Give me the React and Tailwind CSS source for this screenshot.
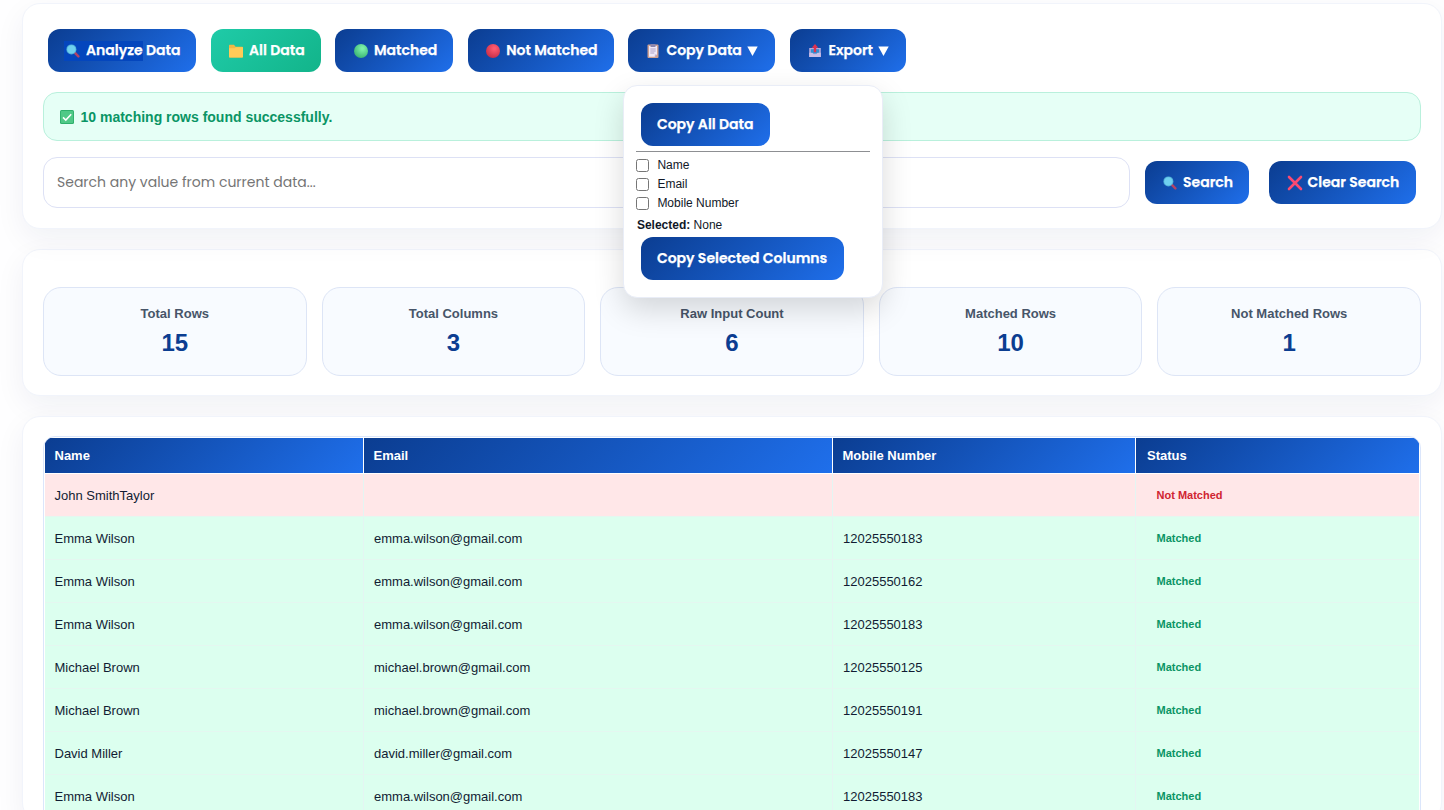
import { useState } from 'react';
import { clsx } from 'clsx';

const stats = [
  { label: 'Total Rows', value: 15 },
  { label: 'Total Columns', value: 3 },
  { label: 'Raw Input Count', value: 6 },
  { label: 'Matched Rows', value: 10 },
  { label: 'Not Matched Rows', value: 1 },
];

const rows = [
  { name: 'John SmithTaylor', email: '', mobile: '', matched: false },
  { name: 'Emma Wilson', email: 'emma.wilson@gmail.com', mobile: '12025550183', matched: true },
  { name: 'Emma Wilson', email: 'emma.wilson@gmail.com', mobile: '12025550162', matched: true },
  { name: 'Emma Wilson', email: 'emma.wilson@gmail.com', mobile: '12025550183', matched: true },
  { name: 'Michael Brown', email: 'michael.brown@gmail.com', mobile: '12025550125', matched: true },
  { name: 'Michael Brown', email: 'michael.brown@gmail.com', mobile: '12025550191', matched: true },
  { name: 'David Miller', email: 'david.miller@gmail.com', mobile: '12025550147', matched: true },
  { name: 'Emma Wilson', email: 'emma.wilson@gmail.com', mobile: '12025550183', matched: true },
];

const columns = ['Name', 'Email', 'Mobile Number'];

function Glyph({ children }) {
  return (
    <svg width="16" height="16" viewBox="0 0 16 16" fill="none" className="shrink-0">
      {children}
    </svg>
  );
}

function MagnifierIcon() {
  return (
    <Glyph>
      <path d="M10.2 10.2l3.2 3.2" stroke="#b04468" strokeWidth="2.5" strokeLinecap="round" />
      <circle cx="6.4" cy="6.4" r="5" fill="#4fb0d8" />
      <circle cx="6.4" cy="6.4" r="4.2" fill="#6fd0ef" />
    </Glyph>
  );
}

function FolderIcon() {
  return (
    <Glyph>
      <path d="M1 2.8c0-.6.4-1 1-1h4l1.6 2H14c.6 0 1 .4 1 1v8.7c0 .6-.4 1-1 1H2c-.6 0-1-.4-1-1z" fill="#f0b845" />
      <path d="M1 5.3h5.4l1.5-1.1H15v9.3c0 .6-.4 1-1 1H2c-.6 0-1-.4-1-1z" fill="#ffcb58" />
    </Glyph>
  );
}

function DotIcon({ id, light, dark }) {
  return (
    <Glyph>
      <defs>
        <radialGradient id={id} cx="0.6" cy="0.32" r="0.75">
          <stop offset="0.1" stopColor={light} />
          <stop offset="1" stopColor={dark} />
        </radialGradient>
      </defs>
      <circle cx="8" cy="8" r="7" fill={`url(#${id})`} />
    </Glyph>
  );
}

function ClipboardIcon() {
  return (
    <Glyph>
      <rect x="2.5" y="1.5" width="11" height="13.5" rx="1" fill="#cfa293" />
      <path d="M4 3h8v8.5L9.8 13.7H4z" fill="#f0e9f8" />
      <path d="M12 11.5H9.8v2.2z" fill="#b9a9cf" />
      <rect x="5.5" y="1" width="5" height="3" rx=".6" fill="#8c86ad" />
      <path d="M5.3 6h5.4M5.3 8h5.4M5.3 10h4" stroke="#a79bc2" strokeWidth=".9" />
    </Glyph>
  );
}

function OutboxIcon() {
  return (
    <Glyph>
      <path d="M2.2 5h11.6v9H2.2z" fill="#b5a9dc" />
      <path d="M3.8 6.2h8.4v4.3H3.8z" fill="#2f8fd3" />
      <path d="M2.2 9.8h3.3l1 1.5h3l1-1.5h3.3V14H2.2z" fill="#cabfe8" />
      <path d="M8 1l3.3 3.7H9.2v4.5H6.8V4.7H4.7z" fill="#e0314f" />
    </Glyph>
  );
}

function CrossIcon() {
  return (
    <Glyph>
      <path d="M2 2l12 12M14 2L2 14" stroke="#fa4a72" strokeWidth="2.6" strokeLinecap="round" />
    </Glyph>
  );
}

function CheckIcon() {
  return (
    <Glyph>
      <rect x="1" y="1" width="14" height="14" rx="1.5" fill="#2fb06c" />
      <rect x="1.9" y="1.9" width="12.2" height="12.2" rx="1" fill="#50c987" />
      <path d="M4 8.4l2.8 2.7L12.2 5.3" stroke="#fff" strokeWidth="1.5" />
    </Glyph>
  );
}

function Caret() {
  return (
    <svg width="11" height="10" viewBox="0 0 11 10" className="shrink-0">
      <path d="M.3.5h10.4L5.5 9.9z" fill="#fff" />
    </svg>
  );
}

const headingFont = "font-[Poppins,Inter,sans-serif] [font-feature-settings:'cv11']";

function Button({ className, green, children, ...props }) {
  return (
    <button
      className={clsx(
        headingFont,
        'flex h-[43px] shrink-0 items-center rounded-xl text-[14px] font-semibold whitespace-nowrap text-white [-webkit-text-stroke:0.25px_white]',
        green ? 'bg-linear-135 from-[#1fcba8] to-[#12b48a]' : 'bg-linear-135 from-[#0b3d91] to-[#1f6feb]',
        className
      )}
      {...props}
    >
      {children}
    </button>
  );
}

function Card({ className, children }) {
  return (
    <section
      className={clsx(
        'rounded-[18px] border border-[#f1f4fb] bg-white px-5 shadow-[0_10px_30px_rgba(15,35,80,0.06)]',
        className
      )}
    >
      {children}
    </section>
  );
}

function CopyMenu({ selected, onToggle }) {
  return (
    <div className="absolute top-[56px] -left-[5px] z-10 h-[213px] w-[260px] rounded-[14px] border border-[#e9edf7] bg-white p-3 pt-[17px] text-[12px] leading-[19px] text-[#111827] shadow-[0_12px_30px_rgba(0,0,0,0.15)]">
      <Button className="ml-[5px] w-[129px] pl-[15.5px]">Copy All Data</Button>
      <hr className="mt-[5px] mb-[4px] border-t-[1px] border-[#8d8f92]" />
      {columns.map((column) => (
        <label key={column} className="flex h-[19px] items-center">
          <input
            type="checkbox"
            checked={selected.includes(column)}
            onChange={() => onToggle(column)}
            className="mr-2 size-[13px] appearance-none rounded-[2.5px] border border-[#767676] bg-white checked:bg-[#1f6feb]"
          />
          {column}
        </label>
      ))}
      <p className="mt-[3px] pl-[0.5px]">
        <b>Selected:</b> {selected.length ? selected.join(', ') : 'None'}
      </p>
      <Button className="mt-[2px] ml-[5px] w-[203px] pl-[15.5px]">Copy Selected Columns</Button>
    </div>
  );
}

function Toolbar() {
  const [menuOpen, setMenuOpen] = useState(true);
  const [selected, setSelected] = useState([]);

  const toggle = (column) =>
    setSelected((prev) => (prev.includes(column) ? prev.filter((c) => c !== column) : [...prev, column]));

  return (
    <div className="flex gap-[14.6px] pl-[5px]">
      <Button className="w-[148px] pl-4">
        <span className="flex h-5 items-center gap-[5px] bg-[#0446bd] pl-px">
          <MagnifierIcon />
          Analyze
        </span>
        <span className="ml-[3.5px]">Data</span>
      </Button>
      <Button green className="w-[110px] gap-[5px] pl-[17.5px]">
        <FolderIcon />
        All Data
      </Button>
      <Button className="w-[118px] gap-[5px] pl-[17.8px]">
        <DotIcon id="dot-green" light="#7cf0a8" dark="#35b070" />
        Matched
      </Button>
      <Button className="w-[146px] gap-[5px] pl-[17.5px]">
        <DotIcon id="dot-red" light="#ff5a6e" dark="#c42b46" />
        Not Matched
      </Button>
      <div className="relative">
        <Button className="w-[147px] gap-[5px] pl-[17px]" onClick={() => setMenuOpen(!menuOpen)}>
          <ClipboardIcon />
          Copy Data
          <Caret />
        </Button>
        {menuOpen && <CopyMenu selected={selected} onToggle={toggle} />}
      </div>
      <Button className="w-[116px] gap-[5px] pl-[17.5px]">
        <OutboxIcon />
        Export
        <Caret />
      </Button>
    </div>
  );
}

const cell = 'flex items-center border-r border-[#e4f5f2] pt-px';

function ResultsTable() {
  return (
    <div className="overflow-hidden rounded-t-xl border border-[#dbe6fb] p-px">
      <div className="mb-px grid grid-cols-[318px_468px_302px_283px] gap-px text-[13px] font-bold text-white">
        {[...columns, 'Status'].map((title) => (
          <div
            key={title}
            className="flex h-[35px] items-center bg-linear-135 from-[#0b3d91] to-[#1f6feb] pl-[9.5px] last:pl-[11px]"
          >
            {title}
          </div>
        ))}
      </div>
      {rows.map((row, i) => (
        <div
          key={i}
          className={clsx(
            'grid h-[43px] grid-cols-[319px_469px_303px_283px] border-b border-[#e4f7f0] text-[13px] text-[#111c33]',
            row.matched ? 'bg-[#dcffef]' : 'bg-[#ffe7e8]'
          )}
        >
          <span className={clsx(cell, 'pl-[9.5px]')}>{row.name}</span>
          <span className={clsx(cell, 'pl-[10px]')}>{row.email}</span>
          <span className={clsx(cell, 'pl-[10px]')}>{row.mobile}</span>
          <span
            className={clsx(
              'flex items-center pt-px pl-[20.5px] text-[11px] font-bold',
              row.matched ? 'text-[#0a9565]' : 'text-[#d02431]'
            )}
          >
            {row.matched ? 'Matched' : 'Not Matched'}
          </span>
        </div>
      ))}
    </div>
  );
}

export default function App() {
  const [query, setQuery] = useState('');

  return (
    <div className="h-[810px] overflow-hidden bg-[#fefeff] font-['Liberation_Sans',Arial,sans-serif]">
      <main className="ml-[22px] flex w-[1420px] flex-col gap-5 pt-[3px]">
        <Card className="relative z-10 h-[226px] pt-[25px]">
          <Toolbar />

          {/* Status message */}
          <div className="mt-5 flex h-[49px] items-center gap-[5px] rounded-[14px] border border-[#b9f0dc] bg-[#e6fff6] pl-[15px] text-[14px] font-bold text-[#0a9565]">
            <CheckIcon />
            <span className="pt-px pl-[0.5px]">10 matching rows found successfully.</span>
          </div>

          {/* Search */}
          <div className="mt-4 flex items-center">
            <input
              value={query}
              onChange={(e) => setQuery(e.target.value)}
              placeholder="Search any value from current data..."
              className={clsx(
                headingFont,
                'h-[51px] w-[1087px] rounded-[14px] border border-[#dde1f5] bg-white px-[13px] text-[14px] outline-none placeholder:text-[#757575]'
              )}
            />
            <Button className="ml-[15px] w-[104px] gap-[5px] pl-[17px]">
              <MagnifierIcon />
              Search
            </Button>
            <Button className="ml-5 w-[147px] gap-[5px] pl-[17.5px]" onClick={() => setQuery('')}>
              <CrossIcon />
              Clear Search
            </Button>
          </div>
        </Card>

        <Card className="h-[147px] pt-[37px]">
          <div className="grid grid-cols-5 gap-[15px]">
            {stats.map((stat) => (
              <div
                key={stat.label}
                className="flex h-[89px] flex-col items-center rounded-[18px] border border-[#dde5f6] bg-[#f8fbff] pt-4"
              >
                <p className="text-[13px] leading-5 font-bold text-[#475569]">{stat.label}</p>
                <p className="mt-[3px] text-[24px] leading-8 font-bold text-[#0b3d91]">{stat.value}</p>
              </div>
            ))}
          </div>
        </Card>

        <Card className="pt-[19px]">
          <ResultsTable />
        </Card>
      </main>
    </div>
  );
}
